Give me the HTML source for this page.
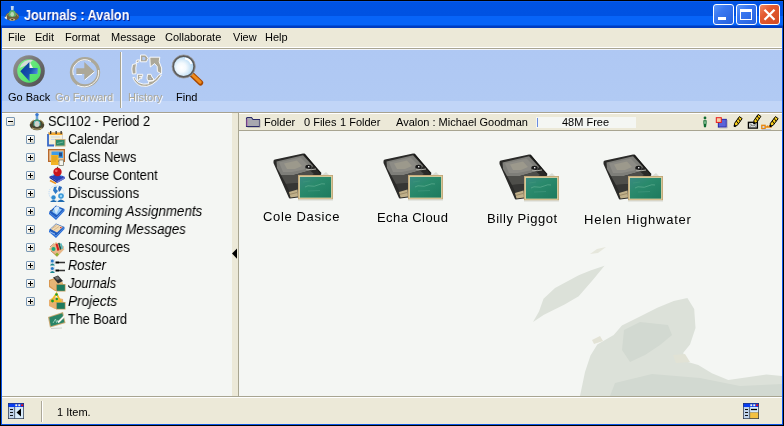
<!DOCTYPE html>
<html><head><meta charset="utf-8">
<style>
*{margin:0;padding:0;box-sizing:border-box}
html,body{width:784px;height:426px;overflow:hidden;background:#000}
body{position:relative;font-family:"Liberation Sans",sans-serif;font-size:11px;color:#000}
.a{position:absolute;will-change:transform}
#frame{left:1px;top:1px;width:782px;height:424px;background:#0A55E6}
#title{left:1px;top:1px;width:782px;height:27px;background:linear-gradient(#0A5CEC 0px,#0A5CEC 1px,#0053E3 1px,#0052E2 15px,#0764F8 15px,#0764F8 24px,#0050DC 24px,#0050DC 25px,#003CC0 25px)}
#ttext{left:24px;top:7px;font-weight:bold;font-size:14px;color:#fff;transform:scaleX(0.905);transform-origin:0 0;text-shadow:1px 1px 0 #0A1E8A;white-space:nowrap}
.tbtn{top:4px;width:21px;height:21px;border:1px solid #fff;border-radius:3px;background:linear-gradient(135deg,#5C98FA 0%,#3A78F0 35%,#2460DE 100%)}
#bclose{background:linear-gradient(135deg,#F08A64 0%,#E45A30 35%,#D24A22 100%)}
#menu{left:2px;top:28px;width:780px;height:19px;background:#ECE9D8}
.mi{top:31px;white-space:nowrap}
#tbar{left:2px;top:47px;width:780px;height:66px;background:linear-gradient(#FFFFFF 0,#FFFFFF 1px,#A9A591 1px,#A9A591 2px,#F2F5FB 2px,#F2F5FB 3px,#AFC8F3 3px,#B1CAF3 54px,#C1D5F7 54px,#C1D5F7 65px,#A7A28F 65px)}
.tl{top:91px;white-space:nowrap;text-align:center}
.dis{color:#ACA899;text-shadow:1px 1px 0 #F6F8FC}
#left{left:2px;top:113px;width:230px;height:283px;background:linear-gradient(#FFFFFF 0,#FFFFFF 1px,#F4F6F3 1px)}
#split{left:232px;top:113px;width:6px;height:283px;background:#ECE9D8}
#splitline{left:238px;top:113px;width:1px;height:283px;background:#A8A591}
#hdr{left:239px;top:113px;width:543px;height:17px;background:linear-gradient(#FFFFFF 0,#FFFFFF 1px,#ECE9D8 1px)}
#hdrline{left:239px;top:130px;width:543px;height:1px;background:#A8A591}
#content{left:239px;top:131px;width:543px;height:265px;background:#F4F6F3;overflow:hidden}
#stline{left:2px;top:396px;width:780px;height:1px;background:#A8A591}
#status{left:2px;top:397px;width:780px;height:27px;background:linear-gradient(#FFFFFF 0,#FFFFFF 1px,#ECE9D8 1px)}
.tr{left:68px;white-space:nowrap;font-size:14px;transform-origin:0 0}
.it{font-style:italic}
.box{width:9px;height:9px;border:1px solid #7B98B4;border-radius:1px;background:linear-gradient(135deg,#fff 0%,#F0EFE7 60%,#C6C5B7 100%)}
.box:before{content:"";position:absolute;left:1px;top:3px;width:5px;height:1px;background:#000}
.plus:after{content:"";position:absolute;left:3px;top:1px;width:1px;height:5px;background:#000}
.lbl{white-space:nowrap;font-size:13px;letter-spacing:0.45px}
</style></head><body>
<div id="frame" class="a"></div>
<div id="title" class="a"></div>
<div id="ttext" class="a">Journals : Avalon</div>

<div class="a tbtn" style="left:713px"></div>
<div class="a" style="left:718px;top:17px;width:8px;height:3px;background:#fff"></div>
<div class="a tbtn" style="left:736px"></div>
<div class="a" style="left:740px;top:9px;width:12px;height:11px;border:1px solid #fff;border-top-width:3px"></div>
<div class="a tbtn" id="bclose" style="left:759px"></div>
<svg class="a" style="left:759px;top:4px" width="21" height="21"><path d="M5.5 5.8L15.5 15.8M15.5 5.8L5.5 15.8" stroke="#fff" stroke-width="2.3"/></svg>

<div id="menu" class="a"></div>
<div class="a mi" style="left:8px">File</div>
<div class="a mi" style="left:35px">Edit</div>
<div class="a mi" style="left:65px">Format</div>
<div class="a mi" style="left:111px">Message</div>
<div class="a mi" style="left:165px">Collaborate</div>
<div class="a mi" style="left:233px">View</div>
<div class="a mi" style="left:265px">Help</div>

<div id="tbar" class="a"></div>
<div class="a" style="left:120px;top:52px;width:1px;height:56px;background:#A9A591"></div>
<div class="a" style="left:121px;top:52px;width:1px;height:56px;background:#F4F8FE"></div>

<!-- toolbar icons -->
<svg class="a" style="left:12px;top:54px" width="34" height="34" viewBox="0 0 34 34">
<defs>
<linearGradient id="gbr" x1="0" y1="0" x2="1" y2="1"><stop offset="0" stop-color="#9A9A96"/><stop offset="0.5" stop-color="#707070"/><stop offset="1" stop-color="#4A4A4A"/></linearGradient>
<linearGradient id="ggr" x1="0" y1="0" x2="1" y2="1"><stop offset="0" stop-color="#7CF08A"/><stop offset="1" stop-color="#48DC64"/></linearGradient>
<linearGradient id="gar" x1="0" y1="0.2" x2="1" y2="0.8"><stop offset="0" stop-color="#0A3A98"/><stop offset="0.55" stop-color="#1550B0"/><stop offset="0.85" stop-color="#4A88D8"/><stop offset="1" stop-color="#8AC8E8"/></linearGradient>
</defs>
<circle cx="17" cy="17" r="15.8" fill="url(#gbr)"/>
<circle cx="17" cy="17" r="11.8" fill="url(#ggr)"/>
<path d="M7.5 14A11.5 11.5 0 0 1 21 6L17 10Z" fill="#D6DCD8"/>
<path d="M8.3 17.2L17.6 7.8V14H25.7V19.9H17.6V27.5Z" fill="url(#gar)"/>
<path d="M17.6 7.8V14H21Z" fill="#F2F2F2"/>
</svg>
<svg class="a" style="left:68px;top:55px" width="34" height="34" viewBox="0 0 34 34">
<circle cx="17" cy="17.2" r="13.6" fill="none" stroke="#ACA899" stroke-width="3.2"/>
<path d="M5.3 20A12 12 0 0 1 23 6.5" fill="none" stroke="#FFFFFF" stroke-width="0.9"/>
<path d="M30.6 15A14.8 14.8 0 0 1 9 30" fill="none" stroke="#FFFFFF" stroke-width="0.9"/>
<path d="M8.3 13.2H16.3V6.9L26.6 16.8L16.3 24.8V19H8.3Z" fill="#ACA899"/>
<path d="M26.6 16.8L16.8 25M8.5 19.6H14" stroke="#FFFFFF" stroke-width="1"/>
</svg>
<svg class="a" style="left:126px;top:52px" width="40" height="40" viewBox="0 0 40 40">
<g stroke="#FFFFFF" stroke-width="0.9" fill="#ACA899">
<path d="M14.5 3H19.5L22.2 6.2L20.5 9.8H14.5Z"/>
<path d="M23.8 5.2H33.8L33.2 9.8L35.6 16L35.6 22L31.4 19.5L31.2 14.5L28.6 11.6L24.3 15Z"/>
<path d="M10.5 8.2L13.5 7.8L12.5 10.3L10 10.5Z"/>
<path d="M6.5 12.5L10.5 11.5L9.8 16L10 21.8L6.4 22L5.8 17Z"/>
<path d="M6.8 25.6Q9.5 32 15 34Q21 35.5 26 32.5Q32 29 35.4 23.2L33 22.6Q30 27.5 27 28.8L22.5 29.5L22.8 31.8Q17 33 12.5 30.5Q9.5 28 8.6 25.3Z"/>
<path d="M11.4 22.3H16.7V24.3H13.6V25H15.8V26.7H13.3V28.2H11.4Z"/>
<path d="M21.6 22.3H25L26 25L27.8 27L27 28.6H21.6L21 26Z"/>
</g>
<path d="M16.4 5H18.6L19.6 6.5L18.8 8.2H16.4Z" fill="#B0C9F3"/>
<path d="M23.5 25.5L25 26.5L24 27.5Z" fill="#B0C9F3"/>
</svg>
<svg class="a" style="left:170px;top:53px" width="36" height="36" viewBox="0 0 36 36">
<defs>
<radialGradient id="lens" cx="0.4" cy="0.55" r="0.6"><stop offset="0" stop-color="#FFFFFF"/><stop offset="0.35" stop-color="#F4FAFE"/><stop offset="1" stop-color="#A9D3F2"/></radialGradient>
<linearGradient id="hnd" x1="0" y1="0" x2="1" y2="-1"><stop offset="0" stop-color="#B04A00"/><stop offset="0.5" stop-color="#F08A18"/><stop offset="1" stop-color="#C85A00"/></linearGradient>
</defs>
<path d="M21.8 21.5L30.5 29.8" stroke="#A84800" stroke-width="5.4" stroke-linecap="round"/>
<path d="M21.6 21L30.2 29.2" stroke="#F08C1C" stroke-width="3" stroke-linecap="round"/>
<circle cx="13.7" cy="13.5" r="10.6" fill="url(#lens)" stroke="#5C5C5C" stroke-width="2"/>
<circle cx="13.7" cy="13.5" r="11.6" fill="none" stroke="#9A9A9A" stroke-width="0.8"/>
<path d="M15 5.5A8 8 0 0 1 21.5 11" stroke="#FFFFFF" stroke-width="2" fill="none"/>
</svg>
<div class="a tl" style="left:8px">Go Back</div>
<div class="a tl dis" style="left:55px">Go Forward</div>
<div class="a tl dis" style="left:128px">History</div>
<div class="a tl" style="left:176px">Find</div>

<div id="left" class="a"></div>
<div id="split" class="a"></div>
<div id="splitline" class="a"></div>
<svg class="a" style="left:231px;top:248px" width="7" height="12"><path d="M1 5.5L6 0.5V10.8Z" fill="#000"/></svg>
<div id="hdr" class="a"></div>
<div id="hdrline" class="a"></div>
<div id="content" class="a"><svg class="a" style="left:0;top:0" width="543" height="265" viewBox="239 131 543 265">
<path d="M533 322L539 311.6L543.5 298.7L555 288L578.7 275.2L590.4 270.5L604.5 265.8L592.8 280L578.7 296.3L564.6 304.6L550.5 311.6L543.5 315Z" fill="#DCE1D9"/>
<path d="M590 254L597 249L606 247L598 253Z" fill="#E6E7DC"/>
<path d="M580 396L585 372L590.5 355.5L597.3 344.6L613.7 335L621.9 325.5L641 316L657.3 307.7L673.7 301L687.4 298L694.2 309L695.5 328L690 344.6L683.3 352.8L684.6 361L698.3 365L711.9 373.2L728.3 380L747.4 377.3L766.5 374.6L782 376L782 396Z" fill="#DCE1D9"/>
<path d="M624 330L640 322L668 325L672 335L660 345L645 355L630 362L622 350Z" fill="#D2D9D1"/>
<path d="M610 396L615 383L652 374L700 378L740 386L782 384L782 396Z" fill="#D2D9D1"/>
<path d="M592 340L600 336L603 341L594 344Z" fill="#E3E3D6"/>
<path d="M673 355L685 354L690 362L676 363Z" fill="#E1E2D5"/>
</svg></div>
<div id="stline" class="a"></div>
<div id="status" class="a"></div>
<div class="a" style="left:41px;top:401px;width:1px;height:21px;background:#ACA899"></div>
<div class="a" style="left:42px;top:401px;width:1px;height:21px;background:#fff"></div>
<div class="a" style="left:57px;top:406px;white-space:nowrap">1 Item.</div>

<!-- tree -->
<svg class="a" style="left:46px;top:130px" width="22" height="20" viewBox="0 0 22 20">
<rect x="2.5" y="2.5" width="14" height="12.5" fill="#F6F0D8" stroke="#B8B8C8" stroke-width="0.6"/>
<rect x="2.5" y="2.5" width="14" height="2.5" fill="#F2A830"/>
<path d="M2 4V15.5H8" stroke="#3A6AC8" stroke-width="1.8" fill="none"/>
<path d="M5 7H14M5 9.5H9" stroke="#C8D8E8" stroke-width="1"/>
<rect x="4" y="1" width="1.3" height="3" fill="#333"/><rect x="9.5" y="1" width="1.3" height="3" fill="#333"/><rect x="14.5" y="1" width="1.3" height="3" fill="#333"/>
<rect x="9" y="9" width="10.5" height="7.5" fill="#C8B080"/>
<rect x="10" y="10" width="8.5" height="5.5" fill="#2E8A6A"/>
<path d="M11 13.5L17 12" stroke="#8AC8B0" stroke-width="0.7"/>
</svg>
<svg class="a" style="left:46px;top:148px" width="22" height="20" viewBox="0 0 22 20">
<rect x="2" y="1" width="17" height="13" fill="#B8682C"/>
<rect x="3.3" y="2.3" width="14.4" height="10.4" fill="#E8C8A0"/>
<rect x="5.5" y="3.5" width="11.5" height="6.5" fill="#3E9CE8"/>
<rect x="13" y="4.5" width="3" height="4" fill="#2A4A80"/>
<rect x="5" y="7" width="7.5" height="10" fill="#F2B428"/>
<path d="M6 9H11M6 11H11M6 13H10" stroke="#D89818" stroke-width="0.8"/>
<rect x="13" y="12" width="4.5" height="5.5" fill="#F4F4EC" stroke="#6A6A5A" stroke-width="0.7"/>
</svg>
<svg class="a" style="left:46px;top:166px" width="22" height="20" viewBox="0 0 22 20">
<path d="M3.5 10.5L11 7.5L19 11L11 15.5Z" fill="#2840B8"/>
<path d="M3.5 10.5V12L11 17L19 12.5V11L11 15.5Z" fill="#1A2A90"/>
<path d="M11 15.5L19 11V12.5L11 17Z" fill="#6A7AD8"/>
<path d="M6 9.5L11 7L16 10" stroke="#8AD0F8" stroke-width="1.2" fill="none"/>
<circle cx="11.5" cy="6" r="4.2" fill="#C8141C"/>
<circle cx="10.3" cy="4.8" r="1.4" fill="#F06060"/>
<path d="M11.5 2V0.8" stroke="#6A5020" stroke-width="1.2"/>
<path d="M4 14.5L10 17.5" stroke="#F09828" stroke-width="1.6"/>
</svg>
<svg class="a" style="left:46px;top:184px" width="22" height="20" viewBox="0 0 22 20">
<circle cx="10.5" cy="9" r="7.5" fill="none" stroke="#A8D0F8" stroke-width="0.8" stroke-dasharray="1.2 1"/>
<path d="M8 3L11 2.5L10 5L12 7L9.5 10L7 6.5Z" fill="#2E7AC8"/>
<path d="M13 2L16 3L15 6L13 8L12 5Z" fill="#2A68B8"/>
<circle cx="7.5" cy="13.5" r="2.2" fill="#2E8AD0"/><path d="M4 18Q7.5 14 11 18Z" fill="#1E6AB0"/>
<circle cx="15" cy="12" r="2.8" fill="#3A98D8"/><path d="M11 18Q15 13 19 18Z" fill="#1E6AB0"/>
<circle cx="15" cy="12" r="1.2" fill="#9AD8F8"/>
</svg>
<svg class="a" style="left:46px;top:202px" width="22" height="20" viewBox="0 0 22 20">
<path d="M3 10L10 3.5L18.5 7L10 16Z" fill="#1E5CC0"/>
<path d="M3 10V12L10 18L18.5 9V7L10 16Z" fill="#2A70D8"/>
<path d="M5.5 9.5L10 5L16 7.5L11 13Z" fill="#90C8F8"/>
<path d="M8 6L11 4L13.5 5.5L10 12Z" fill="#D8ECFC"/>
<path d="M4 8.5L7 9" stroke="#506070" stroke-width="0.8"/>
</svg>
<svg class="a" style="left:46px;top:220px" width="22" height="20" viewBox="0 0 22 20">
<path d="M3 10L10 3.5L18.5 7L10 16Z" fill="#1E5CC0"/>
<path d="M3 10V12L10 18L18.5 9V7L10 16Z" fill="#2A70D8"/>
<path d="M4.5 9L10 4L17 7L11 12.5Z" fill="#F0D8B0"/>
<path d="M6 8.5L10.5 5.5M8 10L13 6.5" stroke="#C8A880" stroke-width="0.7"/>
<rect x="14" y="7" width="1.5" height="1.2" fill="#D84040"/>
<path d="M4 12L9 14" stroke="#A8C8F0" stroke-width="0.8"/>
</svg>
<svg class="a" style="left:46px;top:238px" width="22" height="20" viewBox="0 0 22 20">
<path d="M3 11L10 4L18.5 11L11 19Z" fill="#E8B888"/>
<path d="M4 9L8 5.5M13 5L18 9.5M5 13L11 18" stroke="#C89060" stroke-width="1"/>
<path d="M9.5 6L11.5 5.5L13.5 12L11.5 13Z" fill="#D82020"/>
<path d="M12 5L13.5 4.8L15.5 11L14 12Z" fill="#20584A"/>
<path d="M14 5.5L15.5 5.3L17 10.5L15.5 11.2Z" fill="#50B8C0"/>
<circle cx="7.5" cy="11" r="2" fill="#18A880"/>
<path d="M9 16.5L11 14.5L13 16.5L11 18.5Z" fill="#8AB030"/>
</svg>
<svg class="a" style="left:46px;top:256px" width="22" height="20" viewBox="0 0 22 20">
<rect x="4" y="3" width="5" height="6.5" fill="#D8E0E8"/>
<circle cx="6.3" cy="5" r="1.5" fill="#2878C8"/><path d="M4 9.5Q6.3 5.5 8.8 9.5Z" fill="#1A8890"/>
<rect x="4" y="10.5" width="5" height="6.5" fill="#D8E0E8"/>
<circle cx="6.3" cy="12.5" r="1.5" fill="#2878C8"/><path d="M4 17Q6.3 13 8.8 17Z" fill="#1A8890"/>
<path d="M9.5 6.5H13M9.5 14.5H13" stroke="#000" stroke-width="2"/><path d="M13 6.5H19M13 14.5H19" stroke="#333" stroke-width="1.3"/>
</svg>
<svg class="a" style="left:46px;top:274px" width="22" height="20" viewBox="0 0 22 20">
<path d="M3 6L9 4L17 9L16 17H9L3 13Z" fill="#D89850"/>
<path d="M4 7L9 4.5L17 8L16 14L9 16L4 12Z" fill="#F0C890" opacity="0.6"/>
<path d="M7 3.5L12 1.5L17 7L12 9.5Z" fill="#303030"/>
<path d="M8.5 3.5L11.5 2.3L14 5L11 6Z" fill="#707070"/>
<rect x="10" y="10" width="9.5" height="7.5" fill="#C8A060"/>
<rect x="10.8" y="10.8" width="8" height="6" fill="#1E7A5E"/>
</svg>
<svg class="a" style="left:46px;top:292px" width="22" height="20" viewBox="0 0 22 20">
<path d="M3 8L8 5L17 7L18 17H9L3 14Z" fill="#E8B070"/>
<path d="M5.5 9L10.5 1.5L14.5 9.5Z" fill="none" stroke="#F2C020" stroke-width="1.8"/>
<circle cx="10.5" cy="2.5" r="1.3" fill="#1E9A30"/>
<circle cx="6.5" cy="9" r="1.4" fill="#1E9A30"/>
<circle cx="10.8" cy="7" r="1.2" fill="#1E9A30"/>
<rect x="10" y="10" width="9.5" height="7.5" fill="#C8A060"/>
<rect x="10.8" y="10.8" width="8" height="6" fill="#1E7A5E"/>
</svg>
<svg class="a" style="left:46px;top:310px" width="22" height="20" viewBox="0 0 22 20">
<path d="M2 7L17 2L19.5 13L4 17.5Z" fill="#C8A870"/>
<path d="M3.2 7.6L16.3 3.3L18.4 12.3L4.8 16.3Z" fill="#2A8466"/>
<path d="M7 13L9.5 9L10.5 12.5L12 10" stroke="#A8D8C8" stroke-width="0.8" fill="none"/>
<path d="M12 12.5L18.5 6" stroke="#F4F4F0" stroke-width="1.8"/>
<path d="M5 18.5L16 18" stroke="#B8B8B0" stroke-width="0.6"/>
</svg>
<svg class="a" style="left:26px;top:111px" width="22" height="20" viewBox="0 0 22 20">
<ellipse cx="11" cy="14" rx="7.3" ry="5.3" fill="#4A4630"/>
<path d="M4.5 13Q5 10 8 9M17.5 13Q17 10 14 9" stroke="#A89858" stroke-width="1" fill="none"/>
<path d="M6 17Q11 19.5 16 17" stroke="#B8A870" stroke-width="1.2" fill="none"/>
<path d="M9.8 3.5H12.2L12.3 8.5H9.7Z" fill="#6AA0D8"/>
<circle cx="11" cy="3.6" r="1.7" fill="#3A78D0"/>
<path d="M7.3 14.5Q7.5 9 10 8.2H12Q14.5 9 14.7 14.5Q11 16.5 7.3 14.5Z" fill="#3A9A78"/>
<ellipse cx="11" cy="13" rx="2.6" ry="3" fill="#D0D4CC"/>
<circle cx="8.5" cy="11" r="0.7" fill="#68C8E8"/><circle cx="13.5" cy="11.5" r="0.7" fill="#68C8E8"/>
</svg>

<div class="a box" style="left:6px;top:117px"></div>
<div class="a tr" style="left:48px;top:113px;transform:scaleX(0.918)">SCI102 - Period 2</div>
<div class="a box plus" style="left:26px;top:135px"></div><div class="a tr" style="top:131px;transform:scaleX(0.893)">Calendar</div>
<div class="a box plus" style="left:26px;top:153px"></div><div class="a tr" style="top:149px;transform:scaleX(0.925)">Class News</div>
<div class="a box plus" style="left:26px;top:171px"></div><div class="a tr" style="top:167px;transform:scaleX(0.913)">Course Content</div>
<div class="a box plus" style="left:26px;top:189px"></div><div class="a tr" style="top:185px;transform:scaleX(0.952)">Discussions</div>
<div class="a box plus" style="left:26px;top:207px"></div><div class="a tr it" style="top:203px;transform:scaleX(0.957)">Incoming Assignments</div>
<div class="a box plus" style="left:26px;top:225px"></div><div class="a tr it" style="top:221px;transform:scaleX(0.946)">Incoming Messages</div>
<div class="a box plus" style="left:26px;top:243px"></div><div class="a tr" style="top:239px;transform:scaleX(0.92)">Resources</div>
<div class="a box plus" style="left:26px;top:261px"></div><div class="a tr it" style="top:257px;transform:scaleX(0.922)">Roster</div>
<div class="a box plus" style="left:26px;top:279px"></div><div class="a tr it" style="top:275px;transform:scaleX(0.909)">Journals</div>
<div class="a box plus" style="left:26px;top:297px"></div><div class="a tr it" style="top:293px;transform:scaleX(0.971)">Projects</div>
<div class="a tr" style="top:311px;transform:scaleX(0.903)">The Board</div>

<!-- header icons -->
<svg class="a" style="left:245px;top:115px" width="16" height="14" viewBox="0 0 16 14">
<path d="M1.5 3V11.5H14.5V4.5H8L6.5 2.5H2.5Z" fill="#A8A8B0" stroke="#2A2A6A" stroke-width="1.1"/>
<path d="M2 4.2V11" stroke="#C060B0" stroke-width="0.9"/>
<path d="M2.5 12.5H15V5" stroke="#B8B4A8" stroke-width="0.8" fill="none"/>
</svg>
<svg class="a" style="left:700px;top:113px" width="80" height="18" viewBox="0 0 80 18">
<circle cx="5" cy="5" r="1.4" fill="#0E6A30"/>
<path d="M3.4 7.3H6.6V10L6 14.3H4L3.4 10Z" fill="#0E6A30"/>
<rect x="4.4" y="8.2" width="1.2" height="2.6" fill="#B8E8C0"/>
<rect x="18.3" y="6.3" width="8" height="7.8" fill="#5A64D8" stroke="#1A1AA0" stroke-width="0.9"/>
<path d="M19.5 14.9H27.2V7" stroke="#A8A8B8" stroke-width="0.8" fill="none"/>
<rect x="16.3" y="4.7" width="5" height="4.7" fill="#F4D0A8" stroke="#E81818" stroke-width="1"/>
<path d="M34.30 13.60L37.32 12.33L42.18 5.60L39.42 3.60L34.56 10.33Z" fill="#F6CC18" stroke="#000" stroke-width="1"/><path d="M38.41 10.82L36.35 7.85" stroke="#000" stroke-width="0.9"/><path d="M40.23 8.30L38.17 5.33" stroke="#000" stroke-width="0.9"/><path d="M34.30 13.60L35.35 12.14" stroke="#000" stroke-width="2"/>
<rect x="48.4" y="9.3" width="9" height="5.8" fill="#D8DCD8" stroke="#000" stroke-width="1.3"/>
<path d="M49.5 10.5L53 13L56.5 10.5M49.5 14L52 12M56.5 14L54 12" stroke="#555" stroke-width="0.6" fill="none"/>
<path d="M53.80 10.80L56.78 9.44L60.91 3.35L58.09 1.45L53.97 7.53Z" fill="#F6CC18" stroke="#000" stroke-width="1"/><path d="M57.60 8.23L55.46 5.32" stroke="#000" stroke-width="0.9"/><path d="M59.20 5.87L57.06 2.97" stroke="#000" stroke-width="0.9"/><path d="M53.80 10.80L54.81 9.31" stroke="#000" stroke-width="2"/>
<path d="M64.5 14H71.8M67.5 12.6V14M69.5 12.6V14" stroke="#E8860C" stroke-width="1.3"/>
<rect x="61.8" y="12.3" width="3.3" height="3.3" fill="#C8D8F0" stroke="#E8860C" stroke-width="1.3"/>
<path d="M62 16.5H71" stroke="#A8B8D8" stroke-width="0.7"/>
<path d="M70.10 13.60L73.14 12.37L78.16 5.62L75.44 3.58L70.41 10.34Z" fill="#F6CC18" stroke="#000" stroke-width="1"/><path d="M74.28 10.84L72.27 7.84" stroke="#000" stroke-width="0.9"/><path d="M76.15 8.32L74.14 5.32" stroke="#000" stroke-width="0.9"/><path d="M70.10 13.60L71.17 12.16" stroke="#000" stroke-width="2"/>
</svg>
<!-- status icons -->
<svg class="a" style="left:8px;top:403px" width="17" height="16" viewBox="0 0 17 16">
<rect x="0" y="0" width="16" height="16" fill="#2A3448"/>
<rect x="0.5" y="0.5" width="15" height="3.5" fill="#0A3EF0"/>
<rect x="7.3" y="1.3" width="1.9" height="1.9" fill="#F8F4D8"/><rect x="10.3" y="1.3" width="1.9" height="1.9" fill="#F8F4D8"/><rect x="13.2" y="1.3" width="1.9" height="1.9" fill="#F01010"/>
<rect x="0.7" y="4" width="6" height="11.3" fill="#C0D4EC"/>
<rect x="6.3" y="4" width="0.8" height="11.3" fill="#506070"/>
<rect x="7.1" y="4" width="8.2" height="11.3" fill="#D8ECFC"/>
<path d="M2 6.5H5M2 9.5H5M2 12.5H5" stroke="#111" stroke-width="1"/>
<path d="M8.5 9.5L13 5.5V13.5Z" fill="#000"/>
</svg>
<svg class="a" style="left:743px;top:403px" width="17" height="16" viewBox="0 0 17 16">
<rect x="0" y="0" width="16" height="16" fill="#2A3448"/>
<rect x="0.5" y="0.5" width="15" height="3.5" fill="#0A3EF0"/>
<rect x="7.3" y="1.3" width="1.9" height="1.9" fill="#F8F4D8"/><rect x="10.3" y="1.3" width="1.9" height="1.9" fill="#F8F4D8"/><rect x="13.2" y="1.3" width="1.9" height="1.9" fill="#F01010"/>
<rect x="0.7" y="4" width="6" height="11.3" fill="#C0D4EC"/>
<rect x="6.3" y="4" width="0.8" height="11.3" fill="#506070"/><rect x="7.1" y="4" width="8.2" height="5.5" fill="#D8ECFC"/>
<rect x="7.1" y="9.5" width="8.2" height="5.8" fill="#F2C040"/>
<path d="M2 6.5H5M2 9.5H5M2 12.5H5" stroke="#111" stroke-width="1"/>
<path d="M8 6.5H14" stroke="#000" stroke-width="1.3"/>
</svg>
<!-- title icon -->
<svg class="a" style="left:2px;top:3px" width="20" height="20" viewBox="0 0 20 20">
<ellipse cx="10.2" cy="13.4" rx="6.8" ry="4.3" fill="#6A5C3C"/>
<path d="M4.2 13.5Q5 11 7.2 10.3M16.2 13.5Q15.4 11 13.2 10.3" stroke="#A89060" stroke-width="1" fill="none"/>
<ellipse cx="10.2" cy="16.6" rx="3" ry="1.2" fill="#C8B890"/>
<ellipse cx="10.2" cy="16.6" rx="1.2" ry="0.7" fill="#3A3020"/>
<path d="M8.8 3H11.8L11.5 7.3H9.1Z" fill="#C0D8F0"/>
<path d="M6.5 13Q6.7 8 8.8 7.2H11.6Q13.8 8 14 13Q10.2 15 6.5 13Z" fill="#62B06A"/>
<ellipse cx="10.2" cy="11.3" rx="1.8" ry="2.2" fill="#B8D8B8"/>
<path d="M2.3 14.8L4.8 13V16.6Z" fill="#F4F4F4"/>
</svg>
<!-- header text -->
<div class="a" style="left:264px;top:116px;white-space:nowrap">Folder</div>
<div class="a" style="left:304px;top:116px;white-space:nowrap">0 Files</div>
<div class="a" style="left:340px;top:116px;white-space:nowrap">1 Folder</div>
<div class="a" style="left:396px;top:116px;white-space:nowrap">Avalon : Michael Goodman</div>
<div class="a" style="left:536px;top:117px;width:100px;height:11px;background:#F4F6F3"></div>
<div class="a" style="left:537px;top:118px;width:1px;height:9px;background:#6A8CE0"></div>
<div class="a" style="left:562px;top:116px;white-space:nowrap">48M Free</div>


<!-- book icons -->
<svg width="0" height="0" style="position:absolute">
<defs>
<linearGradient id="cov" x1="0" y1="0" x2="0.6" y2="1"><stop offset="0" stop-color="#5A5A55"/><stop offset="0.35" stop-color="#8C8A82"/><stop offset="0.7" stop-color="#56564F"/><stop offset="1" stop-color="#2E2E2C"/></linearGradient>
<linearGradient id="brd" x1="0" y1="0" x2="1" y2="1"><stop offset="0" stop-color="#2A7A60"/><stop offset="0.5" stop-color="#3A9276"/><stop offset="1" stop-color="#25705A"/></linearGradient>
<symbol id="book" viewBox="0 0 66 52">
<path d="M52 25L56 22L60 26Z" fill="#DADDD6"/>
<path d="M3.5 11Q3.5 9.5 5 9.5L33 3.5Q34.5 3.2 35.5 4.5L51.5 24L46 30L28 47.5L20 48.5Q19 48.5 18.5 47L3.5 13Z" fill="#2A2A28"/>
<path d="M6.5 11.5L33 5.3L43 16L40 20.5L24 25L11 25L7 18Z" fill="#7E7E79"/>
<path d="M9 12.5L30.5 7.5L38.5 15.5L34 19.5L22 22L13 22Z" fill="#8C8B85"/>
<path d="M14 13.5L27 10.5L32 16L25 19L17 19Z" fill="#9C998C"/>
<path d="M11 25L24 25L40 20.5L44 24L30 33L16 34Z" fill="#4E4E4A"/>
<path d="M16 34L30 33L44 24L47 28L28 45L20 43Z" fill="#363634"/>
<path d="M19 42L27.5 39.5L28 46.5L20.5 47.5Z" fill="#C0B08A"/>
<path d="M20 44.3L27 42.5" stroke="#8A7858" stroke-width="0.7"/>
<path d="M34 4L51 23.5" stroke="#1A1A18" stroke-width="1.2"/>
<ellipse cx="38.5" cy="17" rx="3.2" ry="2.2" fill="#1A1A1A"/>
<path d="M36 19Q41 20.5 46 19" stroke="#B8B8B0" stroke-width="0.9" fill="none"/>
<rect x="38" y="16" width="1.4" height="1.4" fill="#E8E8E8"/>
<linearGradient id="brd2" x1="0" y1="0" x2="1" y2="1"><stop offset="0" stop-color="#3A8A80"/><stop offset="0.4" stop-color="#2A8A6C"/><stop offset="1" stop-color="#1E7A5E"/></linearGradient>
<rect x="28" y="25" width="35" height="24.5" fill="#C2A878"/>
<rect x="28.9" y="25.9" width="33.2" height="22.7" fill="#E2D0A2"/>
<rect x="29.9" y="26.9" width="31.2" height="20.7" fill="url(#brd2)"/>
<path d="M35 37Q38 35 41 36T48 35T55 34" stroke="#58A88C" stroke-width="0.8" fill="none"/>
<path d="M38 41L50 40.5M33 32L40 31" stroke="#3E947A" stroke-width="0.8"/>
<path d="M28 50H63" stroke="#D6D8D2" stroke-width="1"/>
</symbol>
</defs></svg>
<svg class="a" style="left:270px;top:150px" width="66" height="52"><use href="#book"/></svg>
<svg class="a" style="left:380px;top:150px" width="66" height="52"><use href="#book"/></svg>
<svg class="a" style="left:496px;top:151px" width="66" height="52"><use href="#book"/></svg>
<svg class="a" style="left:600px;top:151px" width="66" height="52"><use href="#book"/></svg>
<!-- labels -->
<div class="a lbl" style="left:263px;top:209px;letter-spacing:0.63px">Cole Dasice</div>
<div class="a lbl" style="left:377px;top:210px;letter-spacing:0.41px">Echa Cloud</div>
<div class="a lbl" style="left:487px;top:211px;letter-spacing:0.52px">Billy Piggot</div>
<div class="a lbl" style="left:583.6px;top:212px;letter-spacing:0.77px">Helen Highwater</div>

</body></html>
